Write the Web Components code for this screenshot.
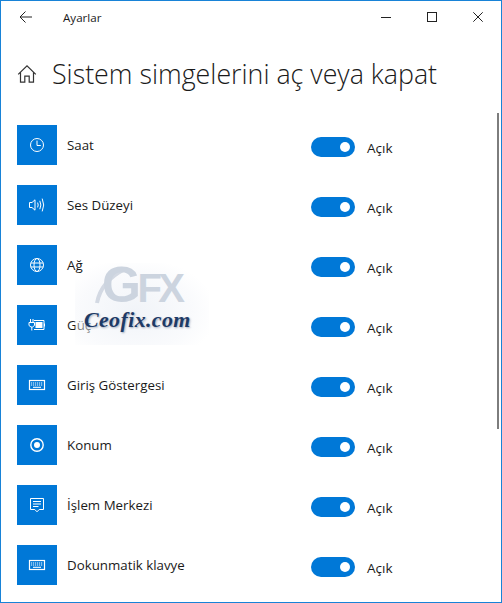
<!DOCTYPE html>
<html lang="tr"><head><meta charset="utf-8"><title>Ayarlar</title>
<style>
html,body{margin:0;padding:0;height:100%;background:#fff}
body{font-family:"Open Sans","Noto Sans",sans-serif;color:#1a1a1a;overflow:hidden}
</style></head><body>
<sk-window>
  <sk-titlebar slot="top" label="Ayarlar"></sk-titlebar>
  <sk-pagehead slot="top" label="Sistem simgelerini aç veya kapat"></sk-pagehead>
  <sk-row icon="clock" label="Saat"></sk-row>
  <sk-row icon="volume" label="Ses Düzeyi"></sk-row>
  <sk-row icon="globe" label="Ağ"></sk-row>
  <sk-row icon="power" label="Güç"></sk-row>
  <sk-row icon="keyboard" label="Giriş Göstergesi"></sk-row>
  <sk-row icon="location" label="Konum"></sk-row>
  <sk-row icon="action" label="İşlem Merkezi"></sk-row>
  <sk-row icon="keyboard" label="Dokunmatik klavye"></sk-row>
  <sk-watermark slot="over"></sk-watermark>
</sk-window>
<script>
const ICONS={
 clock:'<circle cx="10" cy="10" r="6.5"/><path d="M10 5.6V10.5H13.8"/>',
 volume:'<path d="M2.5 7.5H5L8 4.8V15.2L5 12.5H2.5Z"/><path d="M10.6 7.6Q11.8 10 10.6 12.4"/><path d="M12.8 5.8Q14.9 10 12.8 14.2"/><path d="M15.2 3.6Q18.2 10 15.2 16.4"/>',
 globe:'<circle cx="10" cy="10" r="6.5"/><ellipse cx="10" cy="10" rx="3" ry="6.5"/><path d="M3.8 8H16.2M3.8 12H16.2"/>',
 power:'<path d="M7 5.5H17V14.5H7"/><rect x="8.5" y="7" width="7" height="6" fill="#fff" stroke="none"/><rect x="17" y="8.5" width="1" height="3" fill="#fff" stroke="none"/><path d="M3.5 4V7M6 4V7M2 7.5H7.5V10.5L5.5 12H4L2 10.5ZM4.8 12V15.5"/>',
 keyboard:'<rect x="2.5" y="5.5" width="15" height="9" stroke-width="1.2"/><path d="M4 8H16M4 10H16" stroke-dasharray="1.2 .8" stroke-width="1.1"/><path d="M6 12.3H14" stroke-width="1.1"/>',
 location:'<circle cx="10" cy="10" r="6.2" stroke-width="1.4"/><circle cx="10" cy="10" r="3" fill="#fff" stroke="none"/>',
 action:'<path d="M3.5 3.5H16.5V14.5H12.2L10 16.8L7.8 14.5H3.5Z"/><path d="M6 6.5H14M6 9H14M6 11.5H11.5"/>'
};
function tpl(html){const t=document.createElement('template');t.innerHTML=html;return t}
class Base extends HTMLElement{
 constructor(){super();this.attachShadow({mode:'open'}).appendChild(this.constructor.template.content.cloneNode(true))}
}
class SkWindow extends Base{
 static template=tpl(`<style>
 :host{display:block;position:relative;box-sizing:border-box;width:502px;height:603px;border:1px solid #1883d7;background:#fff;overflow:hidden}
 .list{display:flex;flex-direction:column;gap:20px;padding:0 0 0 16px}
 .thumb{position:absolute;right:2px;top:112px;width:2px;height:316px;background:#7d7d7d}
 </style><slot name="top"></slot><div class="list"><slot></slot></div><div class="thumb"></div><slot name="over"></slot>`);
}
class SkTitlebar extends Base{
 static template=tpl(`<style>
 :host{display:flex;align-items:center;height:31px;font-size:11.6px;color:#1a1a1a}
 svg{display:block;fill:none;stroke:#222;stroke-width:1}
 .back{margin-left:18px;width:13px;height:12px}
 .t{margin-left:31px;flex:1;position:relative;top:1px}
 .btns{display:flex;gap:36px;margin-right:18px}
 .btns svg{width:10px;height:10px}
 </style>
 <svg class="back" viewBox="0 0 13 12"><path d="M13 6H1M6.5 .5L1 6L6.5 11.5"/></svg>
 <span class="t"></span>
 <div class="btns">
 <svg viewBox="0 0 10 10"><path d="M0 5.5H10"/></svg>
 <svg viewBox="0 0 10 10"><rect x=".5" y=".5" width="9" height="9"/></svg>
 <svg viewBox="0 0 10 10"><path d="M.3 .3L9.7 9.7M9.7 .3L.3 9.7"/></svg>
 </div>`);
 connectedCallback(){this.shadowRoot.querySelector('.t').textContent=this.getAttribute('label')}
}
class SkPagehead extends Base{
 static template=tpl(`<style>
 :host{display:flex;align-items:center;height:93px;padding:0 0 8px 16px;box-sizing:border-box}
 svg{width:20px;height:20px;fill:none;stroke:#333;stroke-width:1.2;flex:none;position:relative;top:-1px}
 h1{margin:0 0 0 15px;font:300 26.8px/1 "Open Sans","Noto Sans",sans-serif;color:#1a1a1a;white-space:nowrap}
 </style>
 <svg viewBox="0 0 20 20"><path d="M1.2 10.4L10 1.8L18.8 10.4M3.5 8.4V18.2H7.8V12.2H12.2V18.2H16.5V8.4"/></svg>
 <h1></h1>`);
 connectedCallback(){this.shadowRoot.querySelector('h1').textContent=this.getAttribute('label')}
}
class SkToggle extends Base{
 static template=tpl(`<style>
 :host{display:flex;align-items:center;font-size:13.5px;color:#1a1a1a;position:relative;top:2px}
 .track{width:44px;height:20px;border-radius:10px;background:#0078d7;display:flex;align-items:center;justify-content:flex-end;padding-right:5px;box-sizing:border-box}
 .knob{width:10px;height:10px;border-radius:50%;background:#fff}
 .l{margin-left:12px;width:47px;position:relative;top:1px}
 </style><div class="track"><div class="knob"></div></div><span class="l"><slot></slot></span>`);
}
class SkRow extends Base{
 static template=tpl(`<style>
 :host{display:flex;align-items:center;height:40px;font-size:13.3px;color:#1a1a1a}
 .tile{width:40px;height:40px;background:#0078d7;display:flex;align-items:center;justify-content:center;flex:none}
 svg{width:20px;height:20px;fill:none;stroke:#fff;stroke-width:1}
 .label{margin-left:10px;flex:1;white-space:nowrap}
 sk-toggle{margin-right:87px}
 </style><div class="tile"><svg viewBox="0 0 20 20"></svg></div><span class="label"></span><sk-toggle>Açık</sk-toggle>`);
 connectedCallback(){const s=this.shadowRoot;s.querySelector('svg').innerHTML=ICONS[this.getAttribute('icon')];s.querySelector('.label').textContent=this.getAttribute('label')}
}
class SkWatermark extends Base{
 static template=tpl(`<style>
 :host{position:absolute;left:74px;top:262px;width:134px;height:82px;display:block;pointer-events:none;background:radial-gradient(ellipse at 45% 60%,rgba(236,240,246,.75) 0,rgba(244,246,250,.5) 55%,rgba(255,255,255,0) 78%)}
 svg{position:absolute;left:0;top:0;width:134px;height:82px;fill:none;stroke:#d3d9e3}
 .gfx{position:absolute;left:27px;top:0;font:700 50px/44px "Liberation Sans",sans-serif;color:#ccd4df;letter-spacing:-3.5px;white-space:nowrap}
 .gfx span{font-size:40px}
 .c{position:absolute;left:9px;top:45px;font:italic 700 21.9px/24px "Liberation Serif","DejaVu Serif",serif;color:#1d3a66;white-space:nowrap;letter-spacing:.4px;text-shadow:1px 1px 2px rgba(40,60,100,.4)}
 </style><svg viewBox="0 0 134 82"><path d="M22 40Q26 18 50 6" stroke-width="4"/></svg><div class="gfx">G<span>FX</span></div><div class="c">Ceofix.com</div>`);
}
customElements.define('sk-window',SkWindow);
customElements.define('sk-titlebar',SkTitlebar);
customElements.define('sk-pagehead',SkPagehead);
customElements.define('sk-toggle',SkToggle);
customElements.define('sk-row',SkRow);
customElements.define('sk-watermark',SkWatermark);
</script>
</body></html>
